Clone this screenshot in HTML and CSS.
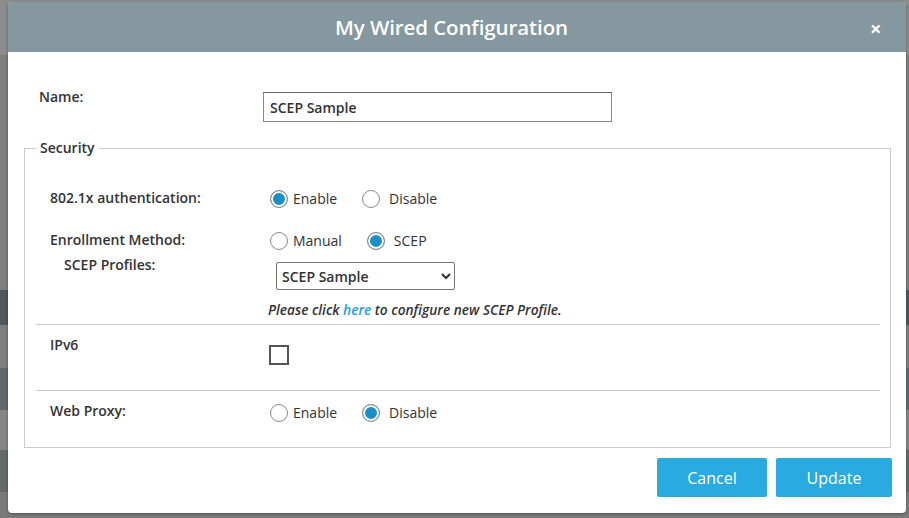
FILE: index.html
```html
<!DOCTYPE html>
<html lang="en">
<head>
    <meta charset="UTF-8">
    <title>My Wired Configuration</title>
    <link rel="stylesheet" href="styles.css">
</head>
<body>
    <div class="modal">
        <div class="modal-header">
            <h2 class="modal-title">My Wired Configuration</h2>
            <span class="close">×</span>
        </div>

        <div class="modal-body">
            <div class="name-row">
                <label class="name-label" for="cfgName">Name:</label>
                <input type="text" id="cfgName" class="name-input" value="SCEP Sample">
            </div>

            <fieldset class="security">
                <legend>Security</legend>

                <div class="section">
                    <div class="row row-auth">
                        <span class="field-label">802.1x authentication:</span>
                        <div class="radios">
                            <span class="opt"><span class="radio checked"></span>Enable</span>
                            <span class="opt"><span class="radio"></span>Disable</span>
                        </div>
                    </div>

                    <div class="row row-enroll">
                        <span class="field-label">Enrollment Method:</span>
                        <div class="radios">
                            <span class="opt"><span class="radio"></span>Manual</span>
                            <span class="opt"><span class="radio checked"></span>SCEP</span>
                        </div>
                    </div>

                    <div class="row row-profile">
                        <span class="field-label sub">SCEP Profiles:</span>
                        <select class="profile-select">
                            <option>SCEP Sample</option>
                        </select>
                    </div>

                    <div class="note">Please click <a href="#">here</a> to configure new SCEP Profile.</div>
                </div>

                <div class="section section-ipv6">
                    <div class="row">
                        <span class="field-label">IPv6</span>
                        <span class="checkbox"></span>
                    </div>
                </div>

                <div class="section section-proxy">
                    <div class="row">
                        <span class="field-label">Web Proxy:</span>
                        <div class="radios">
                            <span class="opt"><span class="radio"></span>Enable</span>
                            <span class="opt"><span class="radio checked"></span>Disable</span>
                        </div>
                    </div>
                </div>
            </fieldset>

            <div class="modal-footer">
                <button class="btn btn-cancel">Cancel</button>
                <button class="btn btn-update">Update</button>
            </div>
        </div>
    </div>
</body>
</html>
```

FILE: styles.css
```css
* {
    box-sizing: border-box;
    font-family: "Open Sans", "Liberation Sans", sans-serif;
}
html, body {
    margin: 0;
    height: 518px;
    overflow: hidden;
}
body {
    padding: 2px 0 0 8px;
    background: linear-gradient(to bottom,
        #8c8c8c 0, #8c8c8c 55px,
        #7e7e7e 55px, #7e7e7e 290px,
        #4e585d 290px, #4e585d 325px,
        #7e7e7e 325px, #7e7e7e 368px,
        #62696d 368px, #62696d 410px,
        #858585 410px, #858585 450px,
        #656a6d 450px, #656a6d 492px,
        #7a7a7a 492px);
}
.modal {
    width: 898px;
    height: 511px;
    background: #fff;
    border-radius: 4px;
    overflow: hidden;
    box-shadow: 0 1px 3px rgba(0,0,0,0.35);
    color: #333;
}
.modal-header {
    height: 50px;
    background: #85979f;
    display: flex;
    align-items: center;
    padding: 0 25px 0 25px;
}
.modal-title {
    flex: 1;
    margin: 0;
    text-align: center;
    color: #fff;
    font-size: 20.5px;
    font-weight: 600;
    letter-spacing: -0.1px;
}
.close {
    width: 11px;
    color: #fff;
    font-size: 20px;
    font-weight: bold;
    line-height: 20px;
    margin-top: 4px;
}
.modal-body {
    padding: 0 15px 0 16px;
    font-size: 14px;
}
.name-row {
    display: grid;
    grid-template-columns: 224px 349px;
    margin-top: 35px;
    padding-left: 15px;
}
.name-label {
    line-height: 20px;
    font-weight: 600;
}
.name-input {
    margin-top: 5px;
    height: 30px;
    border: 1px solid #888;
    border-top-color: #666;
    padding: 0 6px;
    font-size: 14px;
    font-weight: 600;
    color: #333;
}
.security {
    margin: 15px 0 0;
    padding: 0 10px 0 11px;
    border: 1px solid #ccc;
    min-width: 0;
}
.security legend {
    padding: 0 4px;
    line-height: 22px;
    font-size: 14px;
    font-weight: 600;
}
.section {
    padding: 29px 0 4px 14px;
}
.section + .section {
    border-top: 1px solid #ccc;
}
.row {
    display: grid;
    grid-template-columns: 220px 1fr;
    align-items: start;
}
.field-label {
    font-weight: 600;
    line-height: 20px;
}
.field-label.sub {
    padding-left: 14px;
}
.radios {
    display: flex;
    align-items: center;
    height: 20px;
    margin-top: 1px;
}
.opt {
    display: flex;
    align-items: center;
    gap: 5px;
    line-height: 20px;
}
.opt + .opt {
    margin-left: 25px;
    gap: 9px;
}
.radio {
    width: 18px;
    height: 18px;
    border: 1px solid #8a8a8a;
    border-radius: 50%;
    background: #fff;
}
.radio.checked {
    background: #1d8fc7;
    box-shadow: inset 0 0 0 2px #fff;
}
.row-enroll {
    margin-top: 21px;
}
.row-profile {
    margin-top: 4px;
}
.profile-select {
    margin: 7px 0 0 6px;
    width: 179px;
    height: 28px;
    border: 1px solid #767676;
    border-radius: 2px;
    background: #fff;
    font-size: 14px;
    font-weight: 600;
    color: #333;
    padding-left: 1px;
}
.note {
    margin-top: 10px;
    padding-left: 218px;
    line-height: 20px;
    font-size: 13.7px;
    font-style: italic;
    font-weight: 600;
}
.note a {
    color: #1a9fe0;
    text-decoration: none;
}
.section-ipv6 {
    padding: 10px 0 25px 14px;
}
.checkbox {
    display: block;
    width: 20px;
    height: 20px;
    margin: 10px 0 0 -1px;
    border: 2px solid #555;
    background: #fff;
}
.section-proxy {
    padding: 10px 0 24px 14px;
}
.section-proxy .radios {
    margin-top: 2px;
}
.modal-footer {
    display: flex;
    justify-content: flex-end;
    gap: 9px;
    margin: 10px -1px 0 0;
}
.btn {
    height: 39px;
    border: none;
    border-radius: 2px;
    background: #29abe2;
    color: #fff;
    font-size: 16px;
    cursor: pointer;
}
.btn-cancel {
    width: 110px;
}
.btn-update {
    width: 116px;
}
```
